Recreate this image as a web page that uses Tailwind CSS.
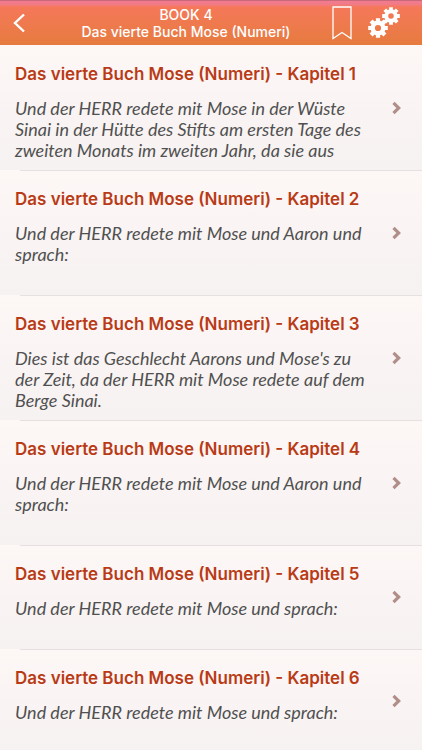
<!DOCTYPE html>
<html lang="de" class="[scrollbar-width:none]">
<head>
<meta charset="utf-8">
<meta name="viewport" content="width=device-width, initial-scale=1">
<title>Das vierte Buch Mose (Numeri)</title>
<script src="https://cdn.jsdelivr.net/npm/@tailwindcss/browser@4"></script>
</head>
<body class="bg-[#fbf6f5] font-['Inter','Liberation_Sans',sans-serif]">
<svg class="hidden" aria-hidden="true">
  <symbol id="chevron" viewBox="0 0 10 14"><path d="M1.500 1.800l5.200 5.200-5.200 5.200" fill="none" stroke="currentColor" stroke-width="3.200"/></symbol>
  <symbol id="gear" viewBox="-10 -10 20 20">
    <circle r="5.300" fill="none" stroke="currentColor" stroke-width="4.400"/>
    <g stroke="currentColor" stroke-width="4.200">
      <path d="M0-9.800V-6M0 6V9.800M-9.800 0H-6M6 0H9.800"/>
      <path d="M0-9.800V-6M0 6V9.800M-9.800 0H-6M6 0H9.800" transform="rotate(45)"/>
    </g>
  </symbol>
</svg>
<header class="flex h-[45px] items-center border-t border-[#c9697c] bg-linear-to-b from-[#f17b8c] from-6% via-[#f57859] via-14% to-[#e67b3e] text-white">
  <div class="flex w-10 shrink-0 pl-3">
    <button type="button" aria-label="Zurück"><svg class="h-5 w-4" viewBox="0 0 16 20" fill="none" stroke="currentColor" stroke-width="2.4"><path d="M12 1.500L3 10l9 8.500"/></svg></button>
  </div>
  <h1 class="min-w-0 flex-1 text-center text-sm leading-[17px] font-medium whitespace-nowrap">BOOK 4<br>Das vierte Buch Mose (Numeri)</h1>
  <div class="flex w-[90px] shrink-0 items-center gap-4">
    <button type="button" aria-label="Lesezeichen"><svg class="h-[34px] w-5" viewBox="0 0 20 34" fill="none" stroke="currentColor" stroke-width="1.300"><path d="M1 1h18v31.500l-9-6-9 6z"/></svg></button>
    <button type="button" aria-label="Einstellungen"><svg class="h-8 w-8" viewBox="0 0 32 32"><use href="#gear" x="0" y="11" width="20" height="20"/><use href="#gear" x="14" y="0" width="18" height="18"/></svg></button>
  </div>
</header>
<main>
  <ul>
    <li class="relative bg-linear-to-b from-[#fdf7f6] to-[#f6f2f1]">
      <a href="#k1" class="flex min-h-[125px] items-center pr-5 pl-[15px]">
        <div class="flex-1 self-stretch pt-[17px] pb-2">
          <h2 class="text-[17px] leading-6 font-semibold text-[#b93b16]">Das vierte Buch Mose (Numeri) - Kapitel 1</h2>
          <p class="pt-3 font-['Lato','Liberation_Sans',sans-serif] text-lg leading-[21px] text-[#505050] italic whitespace-nowrap">Und der HERR redete mit Mose in der Wüste<br>Sinai in der Hütte des Stifts am ersten Tage des<br>zweiten Monats im zweiten Jahr, da sie aus</p>
        </div>
        <svg class="h-[14px] w-[10px] shrink-0 text-[#b08f8a]"><use href="#chevron"/></svg>
      </a>
    </li>
    <li class="relative bg-linear-to-b from-[#fdf7f6] to-[#f6f2f1]">
      <div class="absolute top-0 right-0 left-5 h-px bg-[#e6e1e0]"></div>
      <a href="#k2" class="flex min-h-[125px] items-center pr-5 pl-[15px]">
        <div class="flex-1 self-stretch pt-[17px] pb-2">
          <h2 class="text-[17px] leading-6 font-semibold text-[#b93b16]">Das vierte Buch Mose (Numeri) - Kapitel 2</h2>
          <p class="pt-3 font-['Lato','Liberation_Sans',sans-serif] text-lg leading-[21px] text-[#505050] italic whitespace-nowrap">Und der HERR redete mit Mose und Aaron und<br>sprach:</p>
        </div>
        <svg class="h-[14px] w-[10px] shrink-0 text-[#b08f8a]"><use href="#chevron"/></svg>
      </a>
    </li>
    <li class="relative bg-linear-to-b from-[#fdf7f6] to-[#f6f2f1]">
      <div class="absolute top-0 right-0 left-5 h-px bg-[#e6e1e0]"></div>
      <a href="#k3" class="flex min-h-[125px] items-center pr-5 pl-[15px]">
        <div class="flex-1 self-stretch pt-[17px] pb-2">
          <h2 class="text-[17px] leading-6 font-semibold text-[#b93b16]">Das vierte Buch Mose (Numeri) - Kapitel 3</h2>
          <p class="pt-3 font-['Lato','Liberation_Sans',sans-serif] text-lg leading-[21px] text-[#505050] italic whitespace-nowrap">Dies ist das Geschlecht Aarons und Mose's zu<br>der Zeit, da der HERR mit Mose redete auf dem<br>Berge Sinai.</p>
        </div>
        <svg class="h-[14px] w-[10px] shrink-0 text-[#b08f8a]"><use href="#chevron"/></svg>
      </a>
    </li>
    <li class="relative bg-linear-to-b from-[#fdf7f6] to-[#f6f2f1]">
      <div class="absolute top-0 right-0 left-5 h-px bg-[#e6e1e0]"></div>
      <a href="#k4" class="flex min-h-[125px] items-center pr-5 pl-[15px]">
        <div class="flex-1 self-stretch pt-[17px] pb-2">
          <h2 class="text-[17px] leading-6 font-semibold text-[#b93b16]">Das vierte Buch Mose (Numeri) - Kapitel 4</h2>
          <p class="pt-3 font-['Lato','Liberation_Sans',sans-serif] text-lg leading-[21px] text-[#505050] italic whitespace-nowrap">Und der HERR redete mit Mose und Aaron und<br>sprach:</p>
        </div>
        <svg class="h-[14px] w-[10px] shrink-0 text-[#b08f8a]"><use href="#chevron"/></svg>
      </a>
    </li>
    <li class="relative bg-linear-to-b from-[#fdf7f6] to-[#f6f2f1]">
      <div class="absolute top-0 right-0 left-5 h-px bg-[#e6e1e0]"></div>
      <a href="#k5" class="flex min-h-[104px] items-center pr-5 pl-[15px]">
        <div class="flex-1 self-stretch pt-[17px] pb-2">
          <h2 class="text-[17px] leading-6 font-semibold text-[#b93b16]">Das vierte Buch Mose (Numeri) - Kapitel 5</h2>
          <p class="pt-3 font-['Lato','Liberation_Sans',sans-serif] text-lg leading-[21px] text-[#505050] italic whitespace-nowrap">Und der HERR redete mit Mose und sprach:</p>
        </div>
        <svg class="h-[14px] w-[10px] shrink-0 text-[#b08f8a]"><use href="#chevron"/></svg>
      </a>
    </li>
    <li class="relative bg-linear-to-b from-[#fdf7f6] to-[#f6f2f1]">
      <div class="absolute top-0 right-0 left-5 h-px bg-[#e6e1e0]"></div>
      <a href="#k6" class="flex min-h-[104px] items-center pr-5 pl-[15px]">
        <div class="flex-1 self-stretch pt-[17px] pb-2">
          <h2 class="text-[17px] leading-6 font-semibold text-[#b93b16]">Das vierte Buch Mose (Numeri) - Kapitel 6</h2>
          <p class="pt-3 font-['Lato','Liberation_Sans',sans-serif] text-lg leading-[21px] text-[#505050] italic whitespace-nowrap">Und der HERR redete mit Mose und sprach:</p>
        </div>
        <svg class="h-[14px] w-[10px] shrink-0 text-[#b08f8a]"><use href="#chevron"/></svg>
      </a>
    </li>
  </ul>
</main>
</body>
</html>
